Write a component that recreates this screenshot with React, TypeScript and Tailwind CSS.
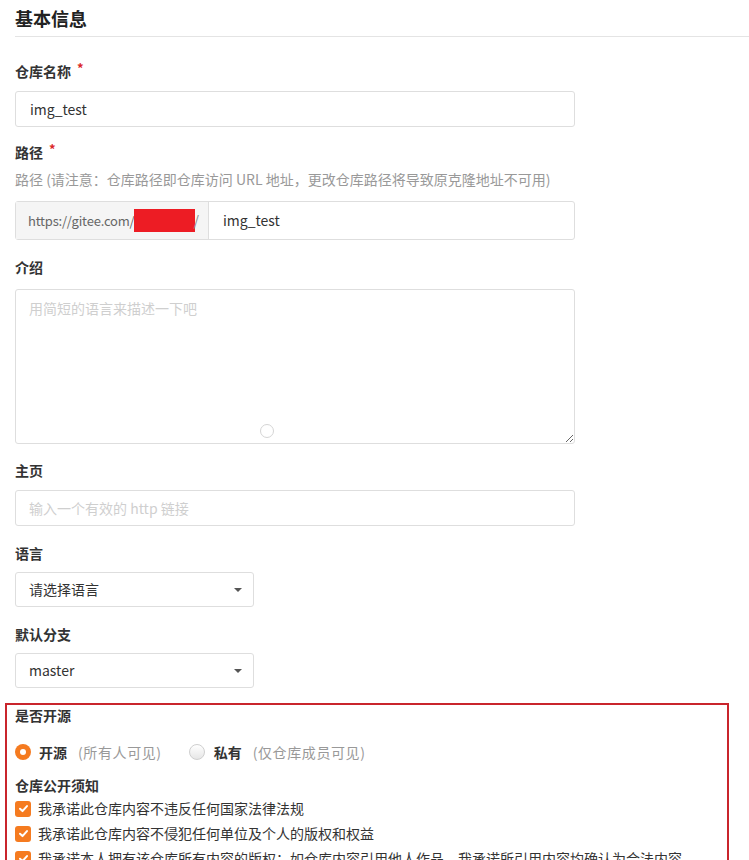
import React from "react";

const font = { fontFamily: '"Noto Sans CJK SC", "Liberation Sans", sans-serif' };

const Label = ({ text, required, className = "" }: { text: string; required?: boolean; className?: string }) => (
  <div className={`h-[20px] leading-[20px] text-[14px] font-bold text-[#333] flex items-center ${className}`}>
    <span>{text}</span>
    {required && <span className="ml-[6px] text-[13px] text-[#db2828] relative -top-[3px]">*</span>}
  </div>
);

const Caret = () => (
  <span className="w-0 h-0 border-l-[4px] border-r-[4px] border-t-[4px] border-l-transparent border-r-transparent border-t-[#555]" />
);

const Radio = ({ checked, className = "" }: { checked?: boolean; className?: string }) =>
  checked ? (
    <span className={`flex shrink-0 w-[16px] h-[16px] rounded-full bg-[#f57b20] items-center justify-center ${className}`}>
      <span className="block w-[6px] h-[6px] rounded-full bg-white" />
    </span>
  ) : (
    <span
      className={`block shrink-0 w-[16px] h-[16px] rounded-full border border-[#cfcfcf] bg-gradient-to-b from-white to-[#e6e6e6] ${className}`}
    />
  );

const Check = () => (
  <span className="w-[16px] h-[16px] rounded-[3px] bg-[#f57b20] flex items-center justify-center shrink-0">
    <svg width="11" height="11" viewBox="0 0 12 12" fill="none">
      <path d="M2.2 6.3 L4.9 8.8 L9.8 3.4" stroke="white" strokeWidth="2.2" strokeLinecap="round" strokeLinejoin="round" />
    </svg>
  </span>
);

const agreements = [
  "我承诺此仓库内容不违反任何国家法律法规",
  "我承诺此仓库内容不侵犯任何单位及个人的版权和权益",
  "我承诺本人拥有该仓库所有内容的版权；如仓库内容引用他人作品，我承诺所引用内容均确认为合法内容",
];

export default function App() {
  return (
    <div className="h-[860px] overflow-hidden bg-white pl-[15px] text-[14px] text-[#333]" style={font}>
      <div className="h-[37px] border-b border-[#e4e4e4] flex items-center">
        <h2 className="text-[18px] font-bold text-[#222] leading-[24px]">基本信息</h2>
      </div>

      <div className="w-[560px]">
        <Label text="仓库名称" required className="mt-[24px]" />
        <div className="mt-[10px] h-[36px] border border-[#dedede] rounded-[3px] flex items-center pl-[14px]">
          img_test
        </div>

        <Label text="路径" required className="mt-[15px]" />
        <div className="mt-[7px] h-[20px] leading-[20px] text-[#999]">
          路径 (请注意：仓库路径即仓库访问 URL 地址，更改仓库路径将导致原克隆地址不可用)
        </div>
        <div className="mt-[12px] h-[39px] border border-[#dedede] rounded-[3px] flex">
          <div className="w-[193px] bg-[#f5f5f5] border-r border-[#dedede] flex items-center pl-[12px] text-[#666] whitespace-nowrap overflow-hidden">
            <span className="text-[13px] tracking-[-0.2px]">https://gitee.com/</span>
            <span className="inline-block w-[61px] h-[23px] bg-[#ed1c24]" />
            <span className="-ml-[2px] text-[#888]">/</span>
          </div>
          <div className="flex items-center pl-[14px]">img_test</div>
        </div>

        <Label text="介绍" className="mt-[17px]" />
        <div className="mt-[12px] relative">
          <textarea
            className="block w-full h-[155px] border border-[#dedede] rounded-[3px] pl-[13px] pt-[8px] outline-none placeholder:text-[#cfcfcf] text-[14px]"
            placeholder="用简短的语言来描述一下吧"
          />
          <span className="absolute left-[245px] top-[135px] w-[14px] h-[14px] rounded-full border border-[#d5d5d5] bg-white" />
        </div>

        <Label text="主页" className="mt-[16px]" />
        <div className="mt-[10px] h-[36px] border border-[#dedede] rounded-[3px] flex items-center pl-[13px] text-[#cfcfcf]">
          输入一个有效的 http 链接
        </div>

        <Label text="语言" className="mt-[17px]" />
        <div className="mt-[9px] w-[239px] h-[35px] border border-[#dedede] rounded-[3px] flex items-center justify-between pl-[13px] pr-[11px]">
          <span>请选择语言</span>
          <Caret />
        </div>

        <Label text="默认分支" className="mt-[17px]" />
        <div className="mt-[9px] w-[239px] h-[35px] border border-[#dedede] rounded-[3px] flex items-center justify-between pl-[13px] pr-[11px]">
          <span>master</span>
          <Caret />
        </div>
      </div>

      <div className="mt-[15px] -ml-[10px] w-[724px] h-[200px] border-2 border-[#c9252c] pl-[8px]">
        <Label text="是否开源" />
        <div className="mt-[17px] h-[20px] flex items-center">
          <Radio checked />
          <span className="ml-[8px] font-bold">开源</span>
          <span className="ml-[11px] text-[#999] tracking-[0.6px]">(所有人可见)</span>
          <Radio className="ml-[27px]" />
          <span className="ml-[9px] font-bold">私有</span>
          <span className="ml-[11px] text-[#999] tracking-[0.6px]">(仅仓库成员可见)</span>
        </div>
        <Label text="仓库公开须知" className="mt-[13px]" />
        <div className="mt-[1px]">
          {agreements.map((t) => (
            <div key={t} className="h-[25px] flex items-center">
              <Check />
              <span className="ml-[7px] whitespace-nowrap">{t}</span>
            </div>
          ))}
        </div>
      </div>
    </div>
  );
}
